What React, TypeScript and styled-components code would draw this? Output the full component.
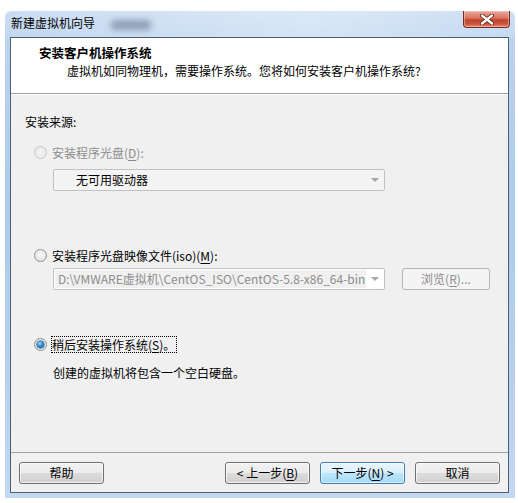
import styled, { createGlobalStyle } from 'styled-components';

const GlobalStyle = createGlobalStyle`
  html, body {
    margin: 0;
    padding: 0;
    background: #ffffff;
  }
  body {
    font-family: "Noto Sans CJK SC", "Noto Sans", sans-serif;
    font-size: 12px;
    color: #000;
  }
`;

const Page = styled.div`
  width: 518px;
  height: 503px;
  padding: 11px 0 0 5px;
  box-sizing: border-box;
`;

const Frame = styled.div`
  width: 510px;
  height: 487px;
  box-sizing: border-box;
  padding: 0 6px 5px 5px;
  display: flex;
  flex-direction: column;
  background: linear-gradient(180deg, #c9dcf2 0%, #b9d2ee 8%, #aecbec 40%, #b6d0ee 75%, #c3d8f1 100%);
  border-radius: 6px 6px 0 0;
`;

const TitleBar = styled.div`
  height: 26px;
  display: flex;
  align-items: flex-start;
  justify-content: space-between;
  background: linear-gradient(90deg, rgba(255,255,255,0.05), rgba(255,255,255,0.35) 60%, rgba(255,255,255,0.1));
  margin: 0 -6px 0 -5px;
  padding: 0 6px 0 6px;
`;

const TitleGroup = styled.div`
  display: flex;
  align-items: center;
  height: 24px;
`;

const TitleText = styled.span`
  line-height: 16px;
  color: #000;
`;

const Smudge = styled.span`
  width: 40px;
  height: 10px;
  margin-left: 16px;
  margin-top: 3px;
  background: rgba(100, 115, 140, 0.6);
  filter: blur(3px);
  border-radius: 4px;
`;

const CloseButton = styled.div`
  width: 47px;
  height: 17px;
  box-sizing: border-box;
  border: 1px solid #7a2a22;
  border-top: none;
  border-radius: 0 0 4px 4px;
  background: linear-gradient(180deg, #e9a99c 0%, #d9735f 45%, #c2432b 55%, #c9553c 80%, #e08b6c 100%);
  box-shadow: inset 0 0 0 1px rgba(255, 220, 210, 0.45);
  display: flex;
  align-items: center;
  justify-content: center;
  margin-right: -1px;
`;

const Panel = styled.div`
  flex: 1;
  display: flex;
  flex-direction: column;
  border: 1px solid #4f5d70;
  background: #f0f0f0;
`;

const Header = styled.div`
  height: 56px;
  box-sizing: border-box;
  background: #ffffff;
  padding: 7px 0 0 28px;
  border-bottom: 1px solid #a0a0a0;
`;

const HeaderTitle = styled.div`
  font-weight: 700;
  line-height: 16px;
  font-size: 12.5px;
`;

const HeaderSub = styled.div`
  line-height: 16px;
  margin: 2px 0 0 28px;
`;

const Body = styled.div`
  flex: 1;
  display: flex;
  flex-direction: column;
  padding: 19px 0 0 14px;
  border-top: 1px solid #ffffff;
`;

const Label = styled.div<{ $top?: number; $indent?: number; $muted?: boolean }>`
  line-height: 16px;
  margin-top: ${p => p.$top ?? 0}px;
  margin-left: ${p => p.$indent ?? 0}px;
  color: ${p => (p.$muted ? '#8d8d8d' : '#000')};
`;

const RadioRow = styled.div<{ $top: number }>`
  display: flex;
  align-items: center;
  height: 16px;
  margin-top: ${p => p.$top}px;
  margin-left: 9px;
  gap: 5px;
`;

const RadioCircle = styled.span<{ $state: 'disabled' | 'off' | 'on' }>`
  width: 13px;
  height: 13px;
  box-sizing: border-box;
  border-radius: 50%;
  border: 1px solid ${p => (p.$state === 'disabled' ? '#c5c5c5' : '#8e8f8f')};
  background: ${p =>
    p.$state === 'disabled'
      ? 'radial-gradient(circle at 50% 50%, #f4f4f4 0%, #e6e6e6 100%)'
      : 'radial-gradient(circle at 50% 40%, #f8f8f8 0%, #dcdcdc 100%)'};
  display: flex;
  align-items: center;
  justify-content: center;
  flex-shrink: 0;
`;

const RadioDot = styled.span`
  width: 7px;
  height: 7px;
  border-radius: 50%;
  background: radial-gradient(circle at 40% 35%, #9fe0ff 0%, #2a8ad4 45%, #0b4f9a 100%);
  box-shadow: 0 0 0 0.5px #0d3f77;
`;

const RadioText = styled.span<{ $muted?: boolean; $focus?: boolean }>`
  line-height: 15px;
  color: ${p => (p.$muted ? '#8d8d8d' : '#000')};
  border: 1px dotted ${p => (p.$focus ? '#000' : 'transparent')};
  margin-left: -1px;
  padding-right: 1px;
`;

const Key = styled.span`
  text-decoration: underline;
  text-underline-offset: 2px;
`;

const FieldRow = styled.div<{ $top: number }>`
  display: flex;
  align-items: center;
  margin-top: ${p => p.$top}px;
  margin-left: 28px;
  gap: 17px;
`;

const Combo = styled.div<{ $plain?: boolean }>`
  width: 332px;
  height: 22px;
  box-sizing: border-box;
  border: 1px solid #c2c2c2;
  border-radius: 2px;
  background: ${p => (p.$plain ? '#ffffff' : '#f4f4f4')};
  display: flex;
  align-items: center;
  overflow: hidden;
`;

const ComboText = styled.span<{ $muted?: boolean; $pad: number }>`
  flex: 1;
  min-width: 0;
  white-space: nowrap;
  padding-left: ${p => p.$pad}px;
  color: ${p => (p.$muted ? '#8d8d8d' : '#000')};
  line-height: 16px;
  align-self: stretch;
  display: flex;
  align-items: center;
  background: ${p => (p.$muted ? '#f0f0f0' : 'transparent')};
  margin: 1px 0 1px 1px;
`;

const ComboArrow = styled.span`
  width: 18px;
  display: flex;
  justify-content: center;
  align-items: center;
  flex-shrink: 0;
  &::after {
    content: '';
    border-left: 4px solid transparent;
    border-right: 4px solid transparent;
    border-top: 4px solid #a6a6a6;
  }
`;

const SmallButton = styled.div`
  width: 88px;
  height: 22px;
  box-sizing: border-box;
  border: 1px solid #b5b5b5;
  border-radius: 3px;
  background: #f4f4f4;
  color: #8d8d8d;
  display: flex;
  align-items: center;
  justify-content: center;
  line-height: 16px;
  margin-top: -1px;
`;

const Footer = styled.div`
  height: 40px;
  box-sizing: border-box;
  border-top: 1px solid #a0a0a0;
  padding: 9px 8px 0 8px;
  display: flex;
  gap: 10px;
`;

const Spacer = styled.div`
  flex: 1;
`;

const WizButton = styled.div<{ $primary?: boolean }>`
  width: 85px;
  height: 22px;
  box-sizing: border-box;
  border: 1px solid ${p => (p.$primary ? '#3c7fb1' : '#707070')};
  border-radius: 3px;
  background: ${p =>
    p.$primary
      ? 'linear-gradient(180deg, #eaf6fd 0%, #d9f0fc 50%, #bee6fd 50%, #a7d9f5 100%)'
      : 'linear-gradient(180deg, #f2f2f2 0%, #ebebeb 50%, #dddddd 50%, #cfcfcf 100%)'};
  box-shadow: inset 0 0 0 1px ${p => (p.$primary ? 'rgba(255,255,255,0.6)' : 'rgba(255,255,255,0.7)')};
  display: flex;
  align-items: center;
  justify-content: center;
  line-height: 16px;
`;

const CloseGlyph = () => (
  <svg width="14" height="11" viewBox="0 0 14 11">
    <path d="M2 1.5 L12 9.5 M12 1.5 L2 9.5" stroke="#5a1d14" strokeWidth="4" strokeLinecap="round" />
    <path d="M2 1.5 L12 9.5 M12 1.5 L2 9.5" stroke="#ffffff" strokeWidth="2.4" strokeLinecap="round" />
  </svg>
);

const App = () => {
  return (
    <>
      <GlobalStyle />
      <Page>
        <Frame>
          <TitleBar>
            <TitleGroup>
              <TitleText>新建虚拟机向导</TitleText>
              <Smudge />
            </TitleGroup>
            <CloseButton>
              <CloseGlyph />
            </CloseButton>
          </TitleBar>
          <Panel>
            <Header>
              <HeaderTitle>安装客户机操作系统</HeaderTitle>
              <HeaderSub>虚拟机如同物理机，需要操作系统。您将如何安装客户机操作系统?</HeaderSub>
            </Header>
            <Body>
              <Label>安装来源:</Label>

              <RadioRow $top={14}>
                <RadioCircle $state="disabled" />
                <RadioText $muted>
                  安装程序光盘(<Key>D</Key>):
                </RadioText>
              </RadioRow>
              <FieldRow $top={9}>
                <Combo>
                  <ComboText $pad={21}>无可用驱动器</ComboText>
                  <ComboArrow />
                </Combo>
              </FieldRow>

              <RadioRow $top={56}>
                <RadioCircle $state="off" />
                <RadioText>
                  安装程序光盘映像文件(iso)(<Key>M</Key>):
                </RadioText>
              </RadioRow>
              <FieldRow $top={5}>
                <Combo $plain>
                  <ComboText $muted $pad={3}>
                    D:\VMWARE虚拟机\CentOS_ISO\CentOS-5.8-x86_64-bin
                  </ComboText>
                  <ComboArrow />
                </Combo>
                <SmallButton>
                  浏览(<Key>R</Key>)...
                </SmallButton>
              </FieldRow>

              <RadioRow $top={46}>
                <RadioCircle $state="on">
                  <RadioDot />
                </RadioCircle>
                <RadioText $focus>
                  稍后安装操作系统(<Key>S</Key>)。
                </RadioText>
              </RadioRow>
              <Label $top={13} $indent={28}>
                创建的虚拟机将包含一个空白硬盘。
              </Label>
            </Body>
            <Footer>
              <WizButton>帮助</WizButton>
              <Spacer />
              <WizButton>
                &lt; 上一步(<Key>B</Key>)
              </WizButton>
              <WizButton $primary>
                下一步(<Key>N</Key>) &gt;
              </WizButton>
              <WizButton>取消</WizButton>
            </Footer>
          </Panel>
        </Frame>
      </Page>
    </>
  );
};

export default App;
